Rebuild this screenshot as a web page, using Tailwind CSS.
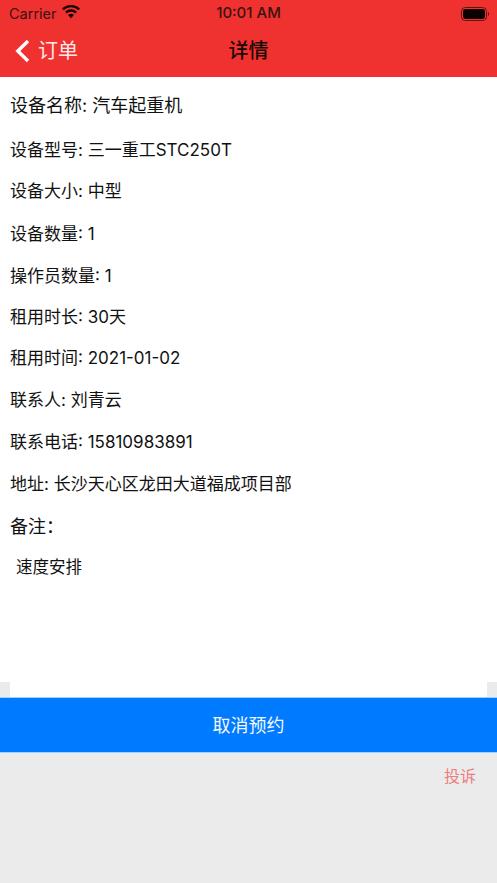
<!DOCTYPE html>
<html lang="zh">
<head>
  <meta charset="utf-8"/>
  <title>详情</title>
  <script src="https://cdn.jsdelivr.net/npm/@tailwindcss/browser@4"></script>
</head>
<body class="bg-[#ebebeb] font-['Inter','Noto_Sans_CJK_SC',sans-serif] text-black">
  <div class="w-[497px] h-[883px] flex flex-col overflow-hidden">
    <header class="bg-[#ef3230] h-[77px] shrink-0 flex flex-col">
      <div class="h-[27px] grid grid-cols-3 items-center pl-[9px] pr-[8px] text-[14.500px] text-[#3a1210]">
        <div class="flex items-center gap-[5px]">
          <span>Carrier</span>
          <svg class="mb-[3px]" width="18" height="14" viewBox="0 0 19 14"><path d="M9.500 13.500 6.400 10.200a4.500 4.500 0 0 1 6.200 0zM4.900 8.600 3.200 6.800a9 9 0 0 1 12.600 0l-1.700 1.800a6.600 6.600 0 0 0-9.200 0zM1.700 5.200 0 3.400a13.800 13.800 0 0 1 19 0l-1.700 1.800a11.400 11.400 0 0 0-15.600 0z" fill="#1c0605"/></svg>
        </div>
        <span class="text-center font-medium text-[15px] pr-[1px]">10:01 AM</span>
        <svg class="justify-self-end" width="28" height="14" viewBox="0 0 28 14"><rect x="0.500" y="0.500" width="25" height="13" rx="3.800" fill="none" stroke="#5a1614"/><rect x="2" y="2" width="22" height="10" rx="2.400" fill="#0a0202"/><path d="M27 5c.6.300 1 1 1 2s-.4 1.700-1 2z" fill="#5a1614"/></svg>
      </div>
      <div class="relative flex-1 flex items-center justify-center">
        <div class="absolute left-[15px] top-[12px] flex items-center gap-[8px] text-[#fde9e8] text-[20px] leading-[24px]">
          <svg width="15" height="24" viewBox="0 0 15 24"><path d="M13 2 2.800 12 13 22" fill="none" stroke="#fff" stroke-width="3.400"/></svg>
          <span>订单</span>
        </div>
        <h1 class="text-[20px] font-medium text-[#1a0706] pb-[2px]">详情</h1>
      </div>
    </header>
    <main class="bg-white h-[605px] shrink-0 px-[10px] pt-[18px] text-[17px] leading-[22px] text-[#111]">
      <p class="h-[44px] text-[18px]">设备名称: 汽车起重机</p>
      <p class="h-[41px]">设备型号: 三一重工STC250T</p>
      <p class="h-[43px]">设备大小: 中型</p>
      <p class="h-[42px]">设备数量: 1</p>
      <p class="h-[41px]">操作员数量: 1</p>
      <p class="h-[41px]">租用时长: 30天</p>
      <p class="h-[42px]">租用时间: 2021-01-02</p>
      <p class="h-[42px]">联系人: 刘青云</p>
      <p class="h-[42px]">联系电话: 15810983891</p>
      <p class="h-[43px]">地址: 长沙天心区龙田大道福成项目部</p>
      <p class="h-[40px] text-[18px]">备注：</p>
      <p class="pl-[6px] text-[16.500px]">速度安排</p>
    </main>
    <div class="h-[15px] shrink-0 mx-[10px] bg-white"></div>
    <button class="bg-[#007aff] h-[56px] shrink-0 border-y border-[#9fd0ff] text-[#f2f8ff] text-[18px]">取消预约</button>
    <div class="flex justify-end pr-[21px] pt-[11px] text-[16px] text-[#ee7d80]">投诉</div>
  </div>
</body>
</html>
